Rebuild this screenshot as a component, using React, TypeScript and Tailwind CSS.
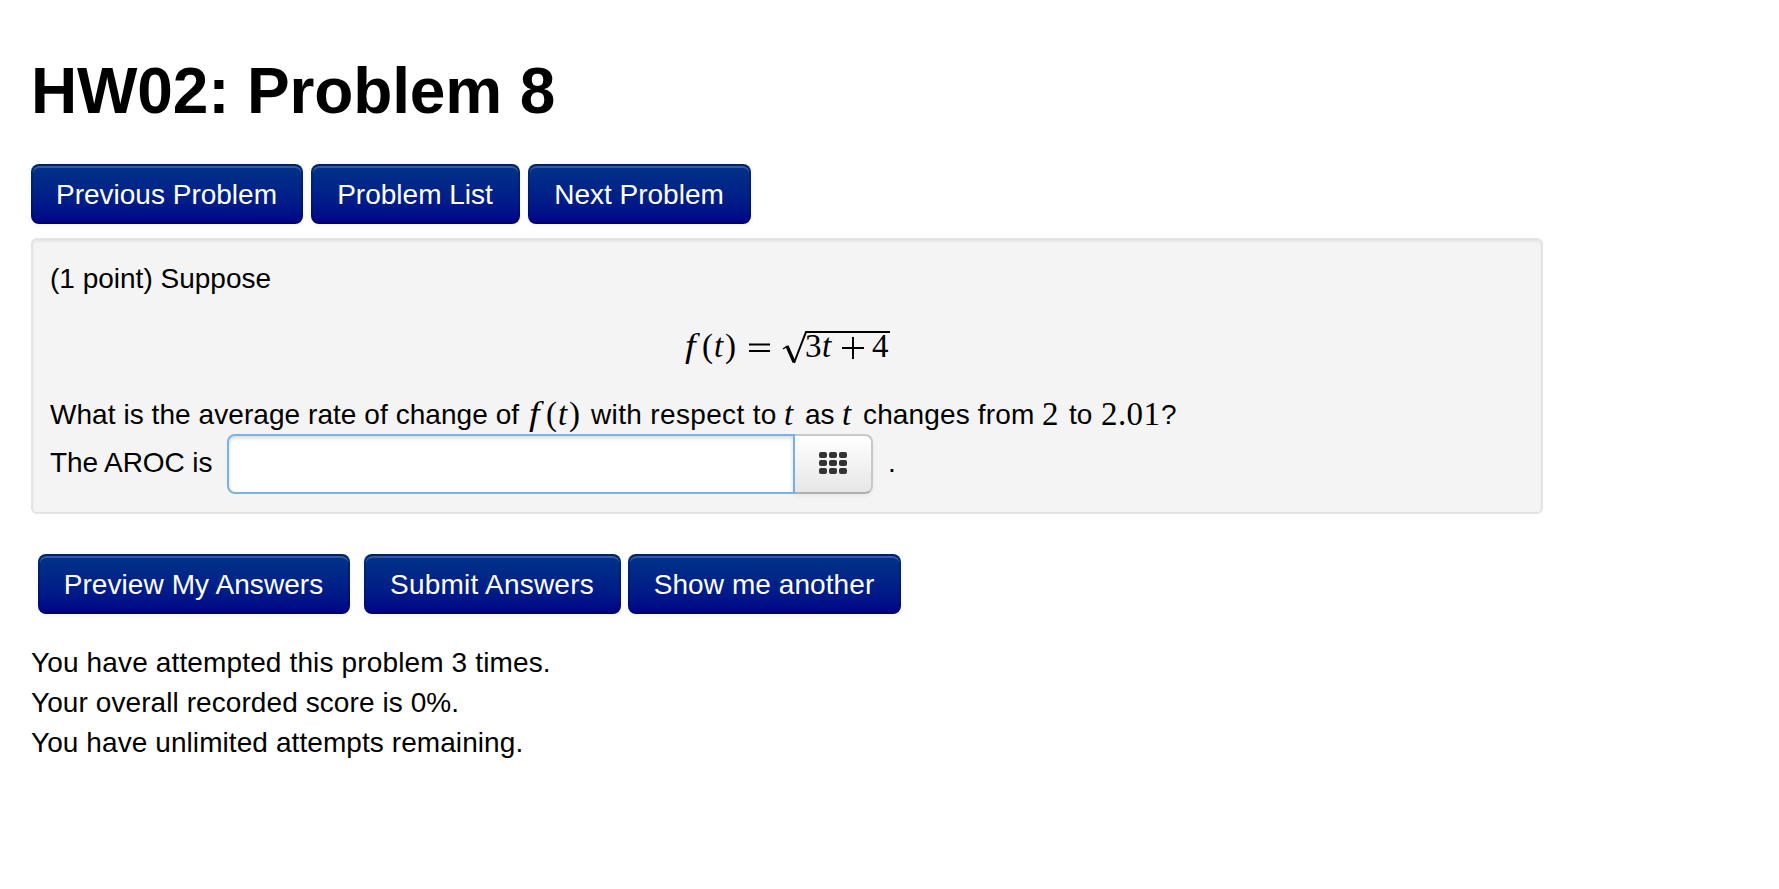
import { clsx } from "clsx";
import type { ReactNode } from "react";

function NavButton({ children, className }: { children: ReactNode; className?: string }) {
  return (
    <button
      type="button"
      className={clsx(
        "flex h-[60px] items-center justify-center whitespace-nowrap rounded-lg border-2 border-black/15 border-t-black/30 border-b-black/20 bg-linear-to-b from-[#003388] to-[#000088] bg-origin-border pt-0.5 pr-px text-white shadow-[inset_0_2px_0_rgba(255,255,255,0.2),0_2px_4px_rgba(0,0,0,0.05)]",
        className,
      )}
    >
      {children}
    </button>
  );
}

function MathText({ children, className }: { children: ReactNode; className?: string }) {
  return (
    <span className={clsx("font-['Liberation_Serif',serif] text-[33px]", className)}>{children}</span>
  );
}

function FunctionOfT() {
  return (
    <>
      <i className="inline-block w-[17px]">
        <span className="inline-block origin-left scale-x-115">f</span>
      </i>
      <span className="inline-block w-[12px]">(</span>
      <i className="inline-block w-[11px]">t</i>
      <span>)</span>
    </>
  );
}

function Formula() {
  return (
    <div className="mt-[27px] flex h-10 pl-[635px] leading-10">
      <MathText className="w-[64px]">
        <FunctionOfT />
      </MathText>
      <svg className="h-10 w-[142px]" viewBox="0 0 142 40" fill="none" stroke="black">
        <path d="M0 18.5H21M0 25H21" strokeWidth="2" />
        <path d="M34 23L38.5 20" strokeWidth="1.5" />
        <path d="M38 20L45 36" strokeWidth="3.2" />
        <path d="M45 37L57 6H141" strokeWidth="2" />
      </svg>
      <MathText className="-ml-[86px] flex w-[90px]">
        <span className="w-[17px]">3</span>
        <i className="w-[20px]">t</i>
        <svg className="h-10 w-[22px]" viewBox="0 0 22 40" stroke="black" strokeWidth="2">
          <path d="M0 22H22M11 11V33" />
        </svg>
        <span className="ml-[8px]">4</span>
      </MathText>
    </div>
  );
}

function KeypadIcon() {
  return (
    <svg width="28" height="22" viewBox="0 0 28 22" fill="#333">
      {[0, 8, 16].map((y) =>
        [0, 10, 20].map((x) => <rect key={`${x}-${y}`} x={x} y={y} width="8" height="6" rx="2" />),
      )}
    </svg>
  );
}

function Question() {
  return (
    <div className="mt-[28px] flex h-10 whitespace-nowrap leading-10">
      <span className="w-[479px] pt-px tracking-[0.06px]">What is the average rate of change of</span>
      <MathText className="w-[62px]">
        <FunctionOfT />
      </MathText>
      <span className="w-[193px] pt-px tracking-[0.35px]">with respect to</span>
      <MathText className="w-[21px] italic">t</MathText>
      <span className="w-[37px] pt-px">as</span>
      <MathText className="w-[21px] italic">t</MathText>
      <span className="w-[179px] pt-px tracking-[0.15px]">changes from</span>
      <MathText className="w-[27px]">2</MathText>
      <span className="w-[32px] pt-px">to</span>
      <MathText className="w-[60px] tracking-[0.4px]">2.01</MathText>
      <span className="pt-px">?</span>
    </div>
  );
}

export default function App() {
  return (
    <main className="min-h-[889px] bg-white pl-[31px] font-['Liberation_Sans',Arial,sans-serif] text-[28px] leading-10 text-black">
      <h1 className="pt-[51px] text-[64px] font-bold leading-[80px] tracking-[-0.15px]">HW02: Problem 8</h1>

      <nav className="mt-[33px] flex gap-2">
        <NavButton className="w-[272px]">Previous Problem</NavButton>
        <NavButton className="w-[209px]">Problem List</NavButton>
        <NavButton className="w-[223px]">Next Problem</NavButton>
      </nav>

      <section className="mt-[14px] h-[276px] w-[1512px] rounded-md border-2 border-[#e3e3e3] bg-[#f4f4f4] pl-[17px] pt-[19px] shadow-[inset_0_2px_2px_rgba(0,0,0,0.05)]">
        <p>(1 point) Suppose</p>
        <Formula />
        <Question />
        <div className="flex">
          <label htmlFor="aroc" className="mt-[9px] w-[177px] tracking-[-0.1px]">
            The AROC is
          </label>
          <input
            id="aroc"
            className="h-[60px] w-[568px] rounded-l-lg border-2 border-[#7ab3e2] bg-white px-3 shadow-[inset_0_2px_4px_rgba(0,0,0,0.15)] outline-none"
          />
          <button
            type="button"
            aria-label="Open equation editor"
            className="flex h-[60px] w-[78px] items-center justify-center rounded-r-lg border-2 border-l-0 border-[#c8c8c8] border-b-[#b0b0b0] bg-linear-to-b from-white to-[#e6e6e6] pb-0.5 shadow-[0_2px_4px_rgba(0,0,0,0.05)]"
          >
            <KeypadIcon />
          </button>
          <span className="ml-[15px] mt-[9px]">.</span>
        </div>
      </section>

      <div className="ml-[7px] mt-[40px] flex">
        <NavButton className="w-[312px] tracking-[0.08px]">Preview My Answers</NavButton>
        <NavButton className="ml-[14px] w-[257px] tracking-[0.22px]">Submit Answers</NavButton>
        <NavButton className="ml-[7px] w-[273px] tracking-[0.08px]">Show me another</NavButton>
      </div>

      <div className="mt-[29px] tracking-[0.14px]">
        <p>You have attempted this problem 3 times.</p>
        <p className="tracking-[0.08px]">Your overall recorded score is 0%.</p>
        <p className="tracking-[0.08px]">You have unlimited attempts remaining.</p>
      </div>
    </main>
  );
}
